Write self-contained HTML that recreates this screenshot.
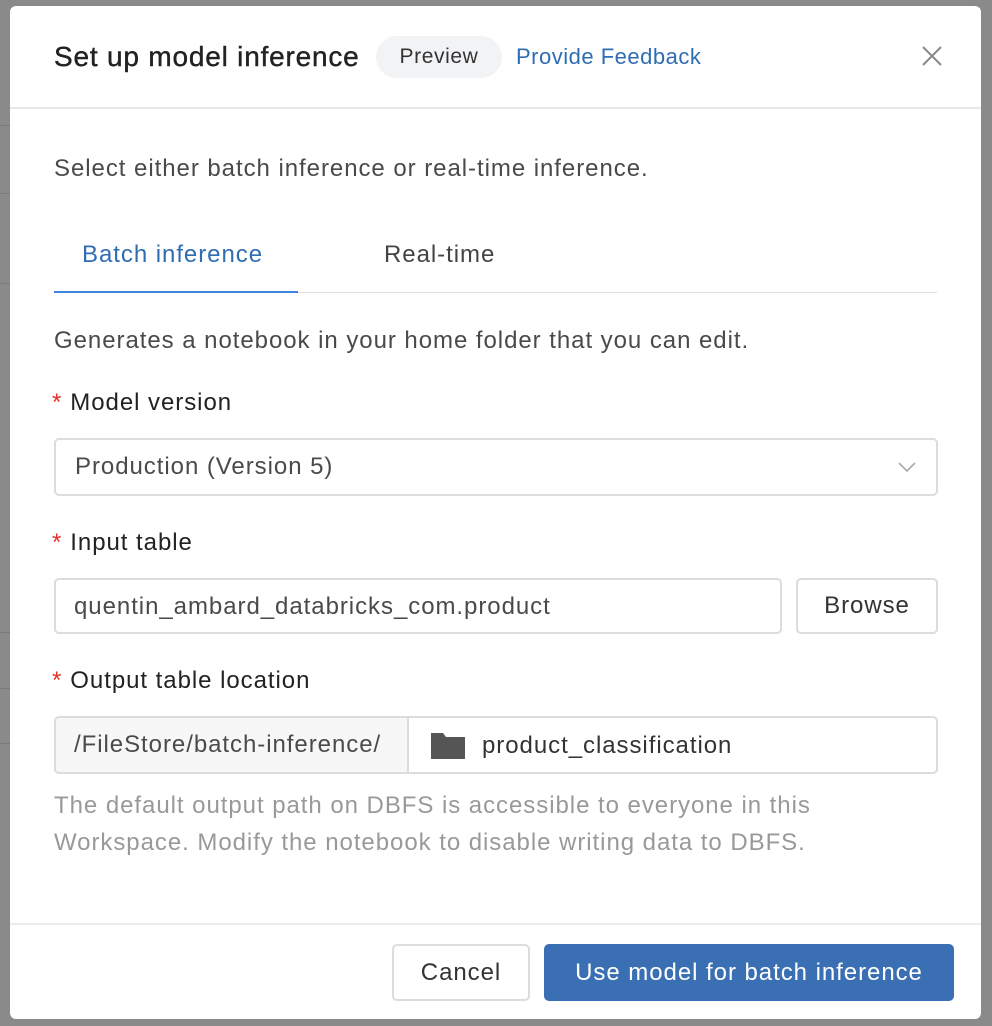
<!DOCTYPE html>
<html><head><style>
*{box-sizing:border-box;margin:0;padding:0}
body{width:992px;height:1026px;background:#8a8a8a;font-family:"Liberation Sans",sans-serif;position:relative;overflow:hidden}
.bgl{position:absolute;left:0;height:1px;width:10px;background:#7a7a7a}
.modal{position:absolute;left:10px;top:6px;width:971px;height:1013px;background:#fff;border-radius:6px}
.a{position:absolute;white-space:nowrap}
.f{font-size:24px;letter-spacing:0.95px}
.t{color:#4a4a4a}
.lab{color:#222}
.lab b{color:#e0322a;font-weight:normal;margin-right:8px}
.box{position:absolute;border:2px solid #dcdcdc;border-radius:5px;background:#fff}
</style></head><body>
<div class="bgl" style="top:125px"></div><div class="bgl" style="top:193px"></div><div class="bgl" style="top:283px"></div><div class="bgl" style="top:632px"></div><div class="bgl" style="top:688px"></div><div class="bgl" style="top:743px"></div>
<div class="modal">
<div class="a" style="left:44px;top:35px;font-size:28px;letter-spacing:0.8px;color:#222;-webkit-text-stroke:0.4px #222">Set up model inference</div>
<div class="a" style="left:366px;top:30px;width:126px;height:42px;border-radius:21px;background:#f2f3f5;color:#333;font-size:21px;letter-spacing:0.6px;text-align:center;line-height:42px">Preview</div>
<div class="a" style="left:506px;top:38px;font-size:22px;letter-spacing:0.5px;color:#2f6db3">Provide Feedback</div>
<svg class="a" style="left:912px;top:40px" width="20" height="20" viewBox="0 0 20 20"><path d="M1 1L19 19M19 1L1 19" stroke="#888" stroke-width="2"/></svg>
<div class="a" style="left:0;top:101px;width:971px;height:2px;background:#e8e8e8"></div>
<div class="a t f" style="left:44px;top:149px">Select either batch inference or real-time inference.</div>
<div class="a f" style="left:72px;top:235px;color:#2f6db3">Batch inference</div>
<div class="a f" style="left:374px;top:235px;color:#444">Real-time</div>
<div class="a" style="left:44px;top:286px;width:883px;height:1px;background:#e0e0e0"></div>
<div class="a" style="left:44px;top:285px;width:244px;height:2px;background:#3d85d8"></div>
<div class="a t f" style="left:44px;top:321px">Generates a notebook in your home folder that you can edit.</div>
<div class="a lab f" style="left:42px;top:383px"><b>*</b>Model version</div>
<div class="box" style="left:44px;top:432px;width:884px;height:58px"></div>
<div class="a t f" style="left:65px;top:447px">Production (Version 5)</div>
<svg class="a" style="left:888px;top:455px" width="18" height="12" viewBox="0 0 18 12"><path d="M1 2L9 10L17 2" stroke="#aaa" stroke-width="1.6" fill="none"/></svg>
<div class="a lab f" style="left:42px;top:523px"><b>*</b>Input table</div>
<div class="box" style="left:44px;top:572px;width:728px;height:56px"></div>
<div class="a t f" style="left:64px;top:587px">quentin_ambard_databricks_com.product</div>
<div class="box f" style="left:786px;top:572px;width:142px;height:56px;text-align:center;line-height:52px;color:#333">Browse</div>
<div class="a lab f" style="left:42px;top:661px"><b>*</b>Output table location</div>
<div class="box" style="left:44px;top:710px;width:884px;height:58px"></div>
<div class="a" style="left:46px;top:712px;width:353px;height:54px;background:#f7f7f7;border-right:2px solid #dcdcdc;border-radius:4px 0 0 4px"></div>
<div class="a t f" style="left:64px;top:725px">/FileStore/batch-inference/</div>
<svg class="a" style="left:421px;top:727px" width="34" height="26" viewBox="0 0 34 26"><path d="M0 0H12L15 4H34V26H0Z" fill="#555"/></svg>
<div class="a t f" style="left:472px;top:726px;color:#333">product_classification</div>
<div class="a f" style="left:44px;top:781px;color:#999;line-height:37px">The default output path on DBFS is accessible to everyone in this<br>Workspace. Modify the notebook to disable writing data to DBFS.</div>
<div class="a" style="left:0;top:917px;width:971px;height:2px;background:#ececec"></div>
<div class="box f" style="left:382px;top:938px;width:138px;height:57px;text-align:center;line-height:53px;color:#333">Cancel</div>
<div class="a f" style="left:534px;top:938px;width:410px;height:57px;background:#3a70b3;border-radius:5px;color:#fff;text-align:center;line-height:57px">Use model for batch inference</div>
</div>
</body></html>
